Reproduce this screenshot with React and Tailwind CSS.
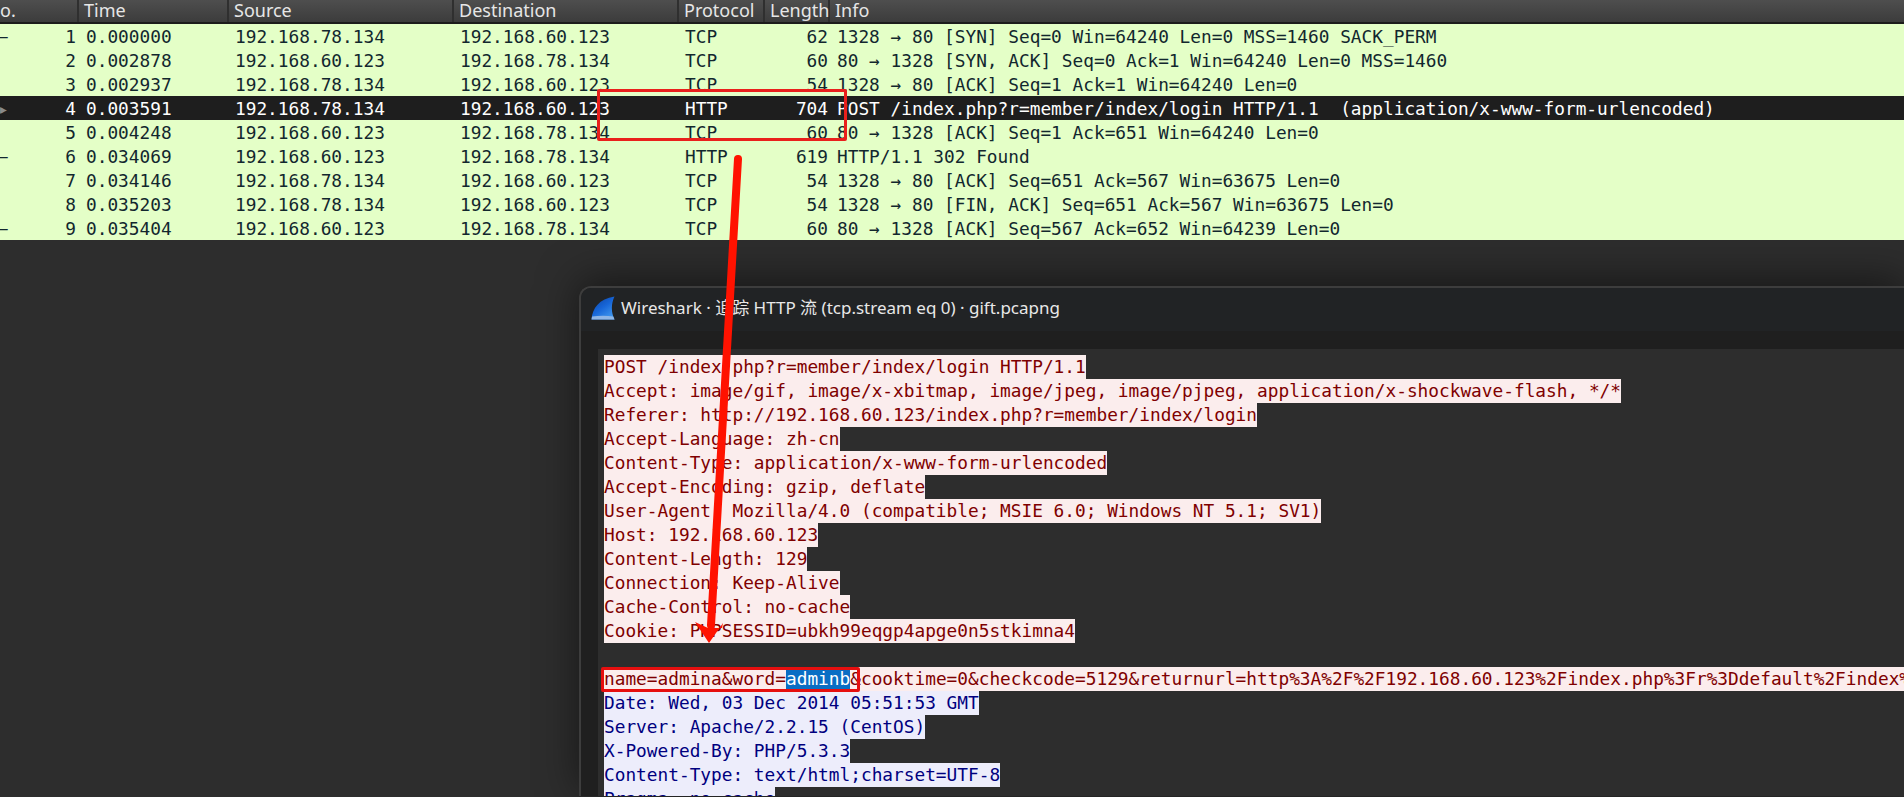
const MONO = "font-['DejaVu_Sans_Mono',monospace]";

const packets = [
  { mark: "–", no: 1, time: "0.000000", src: "192.168.78.134", dst: "192.168.60.123", proto: "TCP", len: 62, info: "1328 → 80 [SYN] Seq=0 Win=64240 Len=0 MSS=1460 SACK_PERM" },
  { no: 2, time: "0.002878", src: "192.168.60.123", dst: "192.168.78.134", proto: "TCP", len: 60, info: "80 → 1328 [SYN, ACK] Seq=0 Ack=1 Win=64240 Len=0 MSS=1460" },
  { no: 3, time: "0.002937", src: "192.168.78.134", dst: "192.168.60.123", proto: "TCP", len: 54, info: "1328 → 80 [ACK] Seq=1 Ack=1 Win=64240 Len=0" },
  { mark: "▸", selected: true, no: 4, time: "0.003591", src: "192.168.78.134", dst: "192.168.60.123", proto: "HTTP", len: 704, info: "POST /index.php?r=member/index/login HTTP/1.1  (application/x-www-form-urlencoded)" },
  { no: 5, time: "0.004248", src: "192.168.60.123", dst: "192.168.78.134", proto: "TCP", len: 60, info: "80 → 1328 [ACK] Seq=1 Ack=651 Win=64240 Len=0" },
  { mark: "–", no: 6, time: "0.034069", src: "192.168.60.123", dst: "192.168.78.134", proto: "HTTP", len: 619, info: "HTTP/1.1 302 Found" },
  { no: 7, time: "0.034146", src: "192.168.78.134", dst: "192.168.60.123", proto: "TCP", len: 54, info: "1328 → 80 [ACK] Seq=651 Ack=567 Win=63675 Len=0" },
  { no: 8, time: "0.035203", src: "192.168.78.134", dst: "192.168.60.123", proto: "TCP", len: 54, info: "1328 → 80 [FIN, ACK] Seq=651 Ack=567 Win=63675 Len=0" },
  { mark: "–", no: 9, time: "0.035404", src: "192.168.60.123", dst: "192.168.78.134", proto: "TCP", len: 60, info: "80 → 1328 [ACK] Seq=567 Ack=652 Win=64239 Len=0" },
];

const requestLines = [
  "POST /index.php?r=member/index/login HTTP/1.1",
  "Accept: image/gif, image/x-xbitmap, image/jpeg, image/pjpeg, application/x-shockwave-flash, */*",
  "Referer: http://192.168.60.123/index.php?r=member/index/login",
  "Accept-Language: zh-cn",
  "Content-Type: application/x-www-form-urlencoded",
  "Accept-Encoding: gzip, deflate",
  "User-Agent: Mozilla/4.0 (compatible; MSIE 6.0; Windows NT 5.1; SV1)",
  "Host: 192.168.60.123",
  "Content-Length: 129",
  "Connection: Keep-Alive",
  "Cache-Control: no-cache",
  "Cookie: PHPSESSID=ubkh99eqgp4apge0n5stkimna4",
];

const responseLines = [
  "Date: Wed, 03 Dec 2014 05:51:53 GMT",
  "Server: Apache/2.2.15 (CentOS)",
  "X-Powered-By: PHP/5.3.3",
  "Content-Type: text/html;charset=UTF-8",
  "Pragma: no-cache",
];

const COLS = "grid grid-cols-[79px_150px_225px_225px_86px_65px_1fr]";

function HeaderCell({ children }) {
  return <div className="h-full pl-[5px] border-r-2 border-[#2f2f2f] whitespace-nowrap last:border-r-0">{children}</div>;
}

function PacketRow({ p }) {
  return (
    <div className={`${COLS} h-6 pt-px leading-6 whitespace-pre ${p.selected ? "bg-[#1e1e1e] text-white" : "bg-[#e4ffc7] text-[#12272e]"}`}>
      <div className="flex justify-between pr-[3px]">
        <span className={p.selected ? "text-[#8a8a8a] -ml-[2px]" : "-ml-[3px]"}>{p.mark || ""}</span>
        <span>{p.no}</span>
      </div>
      <div className="pl-[7px]">{p.time}</div>
      <div className="pl-[6px]">{p.src}</div>
      <div className="pl-[6px]">{p.dst}</div>
      <div className="pl-[6px]">{p.proto}</div>
      <div className="text-right pr-[2px]">{p.len}</div>
      <div className="pl-[7px]">{p.info}</div>
    </div>
  );
}

function Fin() {
  return (
    <svg width="24" height="24" viewBox="0 0 24 24" className="shrink-0">
      <defs>
        <linearGradient id="fin" x1="0" y1="0" x2="0.7" y2="1">
          <stop offset="0" stopColor="#0a3f9e" />
          <stop offset="0.55" stopColor="#1766d8" />
          <stop offset="1" stopColor="#3f96ee" />
        </linearGradient>
      </defs>
      <path d="M0.5 23.5 C1.5 12 8 3 23.5 0.5 C20 8 20 16 23.5 23.5 Z" fill="url(#fin)" />
      <path d="M1 20.5 C8 19.5 16 19.5 22.3 20.5 L23.5 23.5 L0.5 23.5 Z" fill="#8fb6e6" />
    </svg>
  );
}

function StreamLine({ children, server }) {
  return (
    <div className={`h-6 leading-6 w-fit whitespace-pre ${server ? "bg-[#ededfb] text-[#00007f]" : "bg-[#fbeded] text-[#7f0000]"}`}>
      {children}
    </div>
  );
}

export default function App() {
  return (
    <div className={`relative h-[797px] w-[1904px] overflow-hidden bg-[#2d2d2d] ${MONO} text-[17.8px]`}>
      {/* packet list */}
      <div className={`${COLS} h-6 leading-[21px] bg-gradient-to-b from-[#4e4e4e] to-[#3c3c3c] border-b-2 border-[#1c1c1c] text-[#e6e6e6] font-['Noto_Sans',sans-serif] text-[18px]`}>
        <HeaderCell>
          <span className="-ml-[5px]">o.</span>
        </HeaderCell>
        <HeaderCell>Time</HeaderCell>
        <HeaderCell>Source</HeaderCell>
        <HeaderCell>Destination</HeaderCell>
        <HeaderCell>Protocol</HeaderCell>
        <HeaderCell>Length</HeaderCell>
        <HeaderCell>Info</HeaderCell>
      </div>
      <div className="relative z-10">
        {packets.map((p) => (
          <PacketRow key={p.no} p={p} />
        ))}
      </div>

      {/* follow stream window */}
      <div className="h-[46px]" />
      <div className="ml-[579px] h-[510px] bg-[#1f1f1f] border-l-2 border-t-2 border-[#3d3d3d] rounded-tl-[12px] overflow-hidden shadow-[0_-6px_40px_rgba(0,0,0,0.5)]">
        <div className="h-[43px] bg-[#212325] flex items-center gap-[6px] pl-[10px] pb-[3px] text-[#e8e8e8] text-[17px] font-['Noto_Sans','Noto_Sans_CJK_SC',sans-serif] whitespace-nowrap">
          <Fin />
          <span>Wireshark · 追踪 HTTP 流 (tcp.stream eq 0) · gift.pcapng</span>
        </div>
        <div className="h-[18px]" />
        <div className="ml-[17px] h-full bg-[#2d2d2d] pt-[6px] pl-[6px]">
          {requestLines.map((line) => (
            <StreamLine key={line}>{line}</StreamLine>
          ))}
          <div className="h-6" />
          <StreamLine>
            name=admina&amp;word=<span className="bg-[#0a6ec4] text-white">adminb</span>&amp;cooktime=0&amp;checkcode=5129&amp;returnurl=http%3A%2F%2F192.168.60.123%2Findex.php%3Fr%3Ddefault%2Findex%2
          </StreamLine>
          {responseLines.map((line) => (
            <StreamLine key={line} server>{line}</StreamLine>
          ))}
        </div>
      </div>

      {/* red annotations */}
      <div className="absolute z-20 left-[597px] top-[89px] w-[250px] h-[52px] border-[3px] border-[#e9201c] rounded-[2px]" />
      <div className="absolute z-20 left-[601px] top-[667px] w-[259px] h-[25px] border-[3px] border-[#e60f0f] rounded-[2px]" />
      <svg className="absolute z-20 left-0 top-0 pointer-events-none" width="1904" height="797">
        <line x1="738" y1="159" x2="711" y2="625" stroke="#ff1200" strokeWidth="8" strokeLinecap="round" />
        <path d="M709 643 L695 622 L708 628 L722 628 L723 623 Z" fill="#ff1200" />
      </svg>
    </div>
  );
}
